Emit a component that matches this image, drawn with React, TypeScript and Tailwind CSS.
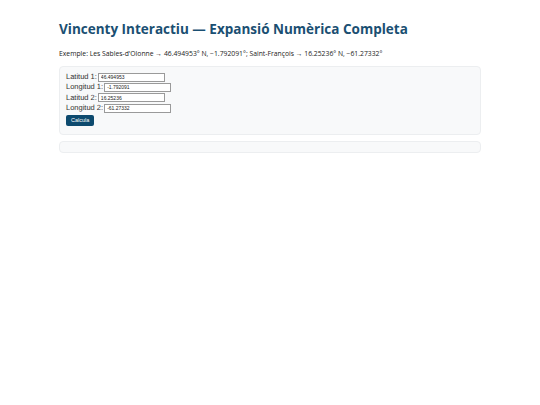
export default function App() {
  const fields = [
    { label: 'Latitud 1:', value: '46.494953' },
    { label: 'Longitud 1:', value: '-1.792091' },
    { label: 'Latitud 2:', value: '16.25236' },
    { label: 'Longitud 2:', value: '-61.27332' },
  ]

  return (
    <div className="min-h-[405px] bg-white px-[59px] pt-[20px] font-['Open_Sans',sans-serif]">
      <h1 className="text-[13.5px] font-bold leading-[18px] text-[#1a4f72]">
        Vincenty Interactiu — Expansió Numèrica Completa
      </h1>
      <p className="mt-[11px] text-[6.8px] leading-[9px] text-[#222]">
        Exemple: Les Sables-d'Olonne → 46.494953° N, −1.792091°; Saint-François → 16.25236° N, −61.27332°
      </p>

      <div className="mt-[8px] flex flex-col items-start rounded-[4px] border border-[#eceef0] bg-[#f8f9fa] px-[6px] pt-[5px] pb-[8px] font-['Liberation_Sans',sans-serif] text-[7.5px] leading-none [text-rendering:geometricPrecision]">
        {fields.map((f, i) => (
          <div
            key={f.label}
            className={`flex items-center text-[7.5px] font-normal text-[#333] ${i === 2 ? 'h-[11px]' : 'h-[10px]'}`}
          >
            <span className="mr-[1px]">{f.label}</span>
            <input
              readOnly
              value={f.value}
              className="h-[9px] w-[67px] border border-[#9a9a9a] bg-white px-[2px] text-[5px] leading-none text-[#222] outline-none"
            />
          </div>
        ))}
        <button className="mt-[2px] h-[11px] rounded-[2px] bg-[#0d4a6e] px-[5px] text-[5.5px] leading-none text-white">
          Calcula
        </button>
      </div>

      <div className="mt-[6px] h-[12px] rounded-[4px] border border-[#eceef0] bg-[#f8f9fa]" />
    </div>
  )
}
